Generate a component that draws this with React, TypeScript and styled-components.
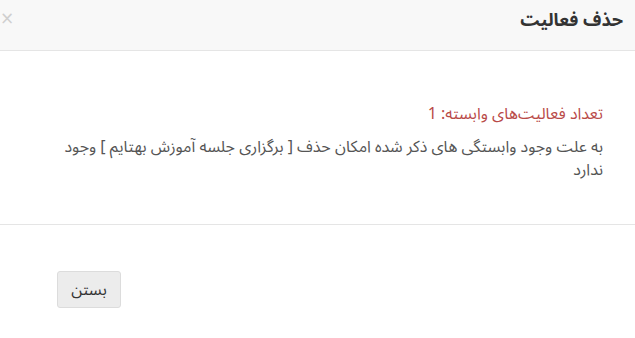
import styled, { createGlobalStyle } from "styled-components";

const GlobalStyle = createGlobalStyle`
  html, body {
    margin: 0;
    padding: 0;
    background: #ffffff;
  }

  body {
    font-family: "Noto Sans Arabic", "DejaVu Sans", sans-serif;
  }
`;

const Modal = styled.div`
  direction: rtl;
  width: 635px;
  height: 338px;
  background: #fff;
  overflow: hidden;
`;

const Header = styled.div`
  height: 50px;
  display: flex;
  align-items: flex-start;
  justify-content: space-between;
  padding: 0 12px 0 0;
  background: #f8f8f8;
  border-bottom: 1px solid #e5e5e5;
`;

const Title = styled.h4`
  margin: 5px 0 0;
  font-size: 18px;
  line-height: 30px;
  font-weight: bold;
  color: #333;
`;

const Close = styled.button`
  border: 0;
  background: none;
  padding: 0;
  margin: 8px 0 0 0;
  font-family: "DejaVu Sans", sans-serif;
  font-size: 17px;
  line-height: 20px;
  color: #cfcfcf;
  cursor: pointer;
`;

const Body = styled.div`
  padding: 52px 32px 42px 53px;
  border-bottom: 1px solid #e5e5e5;
  color: #555;
  font-size: 16px;
  line-height: 23px;
`;

const Count = styled.p`
  margin: 0 0 10px;
  color: #b94a48;
`;

const Message = styled.p`
  margin: 0;
`;

const Footer = styled.div`
  direction: ltr;
  padding: 46px 0 0 57px;
`;

const Button = styled.button`
  width: 64px;
  height: 37px;
  border: 1px solid #dcdcdc;
  border-radius: 3px;
  background: #ececec;
  color: #333;
  font-family: "Noto Sans Arabic", "DejaVu Sans", sans-serif;
  font-size: 16px;
`;

export default function App() {
  return (
    <>
      <GlobalStyle />
      <Modal>
        <Header>
          <Title>حذف فعالیت</Title>
          <Close>×</Close>
        </Header>
        <Body>
          <Count>تعداد فعالیت‌های وابسته: 1</Count>
          <Message>
            به علت وجود وابستگی های ذکر شده امکان حذف [ برگزاری جلسه آموزش بهتایم ] وجود ندارد
          </Message>
        </Body>
        <Footer>
          <Button>بستن</Button>
        </Footer>
      </Modal>
    </>
  );
}
